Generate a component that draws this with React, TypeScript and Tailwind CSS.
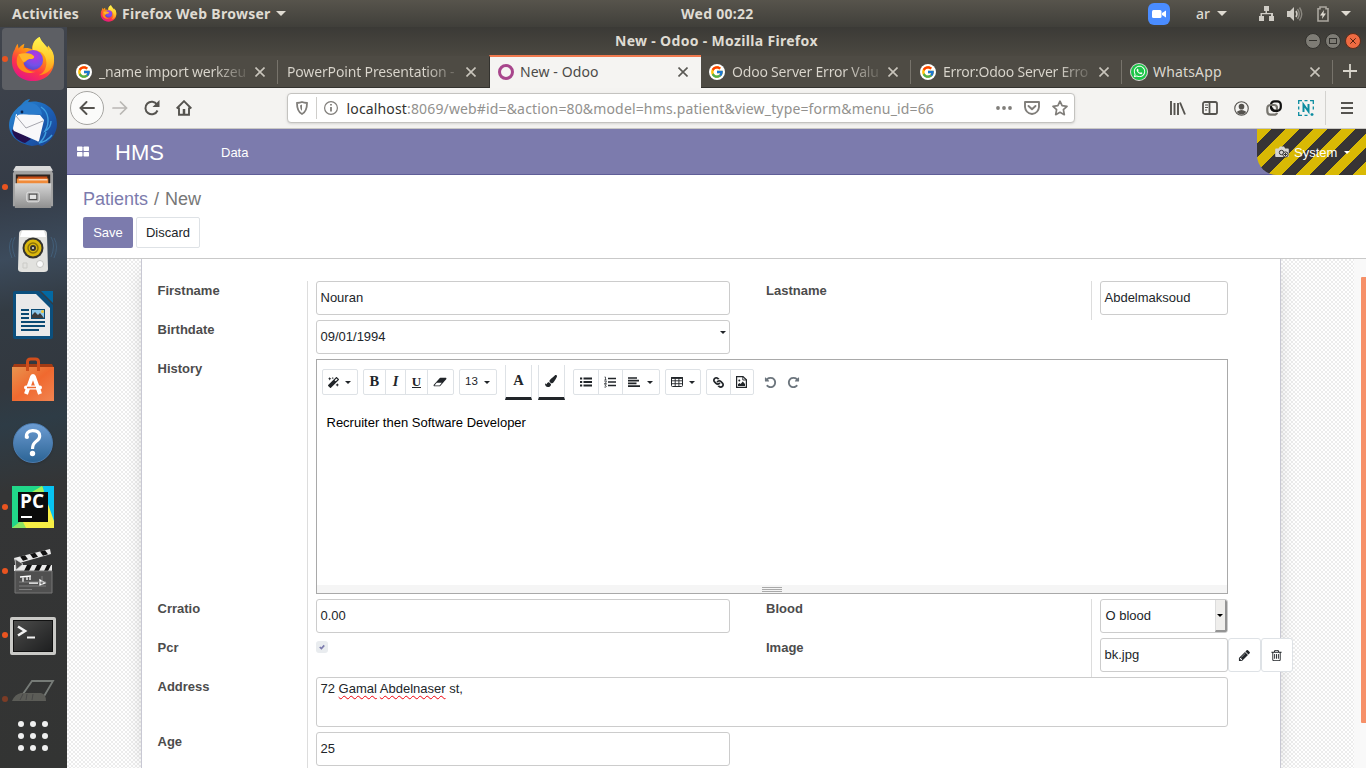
import React, { type ReactNode } from "react";
import { FcGoogle } from "react-icons/fc";
import { FaWhatsapp, FaLink, FaPaintBrush, FaMagic } from "react-icons/fa";

/* ---------- small drawings ---------- */

const Caret = ({ className = "" }: { className?: string }) => (
  <svg viewBox="0 0 10 5" className={className || "w-[10px] h-[5px]"} fill="currentColor">
    <path d="M0 0h10L5 5z" />
  </svg>
);

const FirefoxLogo = ({ className }: { className: string }) => (
  <svg viewBox="0 0 48 48" className={className}>
    <defs>
      <linearGradient id="ffa" x1="0.8" y1="0" x2="0.3" y2="1">
        <stop offset="0" stopColor="#fff44f" />
        <stop offset="0.4" stopColor="#ff980e" />
        <stop offset="0.7" stopColor="#ff3647" />
        <stop offset="1" stopColor="#e31587" />
      </linearGradient>
      <linearGradient id="ffb" x1="0.5" y1="0" x2="0.5" y2="1">
        <stop offset="0" stopColor="#fff64f" />
        <stop offset="0.55" stopColor="#ffcb2e" />
        <stop offset="1" stopColor="#ff8a16" />
      </linearGradient>
      <radialGradient id="ffc" cx="0.6" cy="0.3" r="0.8">
        <stop offset="0" stopColor="#b833e1" />
        <stop offset="0.6" stopColor="#7351e8" />
        <stop offset="1" stopColor="#4a48c8" />
      </radialGradient>
    </defs>
    <path d="M5 14c1-3 2-5 3-6l1 5c2-3 4-4 6-5l-1 5c3-1 7 0 9 1 0-6 3-11 8-13 1 4 4 7 8 11l1-2c4 5 6 10 6 16 0 12-9 21-22 21S2 38 2 26c0-5 1-9 3-12z" fill="url(#ffa)" />
    <path d="M31 1c-6 3-8 8-7 14 8-1 14 5 14 13 0 6-3 11-8 13 10-1 16-8 16-17 0-4-1-8-4-11l-2 2c-2-6-8-9-9-14z" fill="url(#ffb)" />
    <circle cx="24" cy="25" r="10.5" fill="url(#ffc)" />
    <path d="M9 19c5-1 11-2 16 2 1 2-2 3-5 3-3 1-3 3-6 4 1 7 7 10 13 9-8 4-19 0-20-9 0-4 0-6 2-9z" fill="#ff8b19" />
    <path d="M9 19c5-1 12-2 16 2 1 2-2 3-5 3-3 1-4 3-6 3-2-2-3-5-5-8z" fill="#ffb52a" />
  </svg>
);

const Thunderbird = () => (
  <svg viewBox="0 0 48 48" className="size-[48px]">
    <defs>
      <linearGradient id="tba" x1="0" y1="0" x2="1" y2="1">
        <stop offset="0" stopColor="#2b8ed6" />
        <stop offset="0.5" stopColor="#1c63b8" />
        <stop offset="1" stopColor="#1a3f8f" />
      </linearGradient>
    </defs>
    <path d="M12 6c3-4 6-6 9-6l-2 3c16-3 29 7 29 22 0 10-7 18-15 22l-4-1-6 1C11 45 0 38 0 26 0 19 4 12 12 6z" fill="url(#tba)" />
    <path d="M3 31c1 7 6 11 13 13l6-4L5 30z" fill="#25104f" />
    <path d="M7 15l24 1 4 5-5 21q-1 1-2 0L5 32q-1-1-1-3z" fill="#f8f8fa" />
    <path d="M7 17l10 12 17-7" fill="none" stroke="#a6a6ae" strokeWidth="1" />
    <path d="M8 17c-1-7 4-12 11-13 8-1 14 5 14 12-6-2-10 0-15-1-5 0-8 0-10 2z" fill="#2a7bcc" />
    <circle cx="13" cy="13" r="1.400" fill="#0c2450" />
    <path d="M32 8c8 5 9 16 4 24 4-2 6-6 6-10M37 33c-1 4-3 8-7 11 5-1 10-4 13-8" fill="none" stroke="#3f9fe0" strokeWidth="1.400" />
  </svg>
);

const Files = () => (
  <svg viewBox="0 0 44 46" className="h-[44px] w-[42px]" preserveAspectRatio="none">
    <defs>
      <linearGradient id="fla" x1="0" y1="0" x2="0" y2="1">
        <stop offset="0" stopColor="#d6d6d6" />
        <stop offset="1" stopColor="#8f8f8f" />
      </linearGradient>
    </defs>
    <path d="M4 2h36l3 7v34H1V9z" fill="#a2a2a2" />
    <path d="M4 1h36l3 5H1z" fill="#dadada" />
    <path d="M4 10h36v10H4z" fill="#2c2420" />
    <path d="M6 12h31v7H6z" fill="#c44b16" />
    <path d="M5 14h33v6H5z" fill="#f08b3a" />
    <path d="M7 15h30v1H7z" fill="#fff" />
    <path d="M3 19h38v26H3z" fill="url(#fla)" />
    <rect x="15.500" y="28.500" width="13" height="10" rx="2" fill="#ababab" stroke="#e5e5e5" />
    <rect x="18" y="30.500" width="8" height="5.500" fill="#e4e4e4" stroke="#444" strokeWidth="1" />
  </svg>
);

const Rhythmbox = () => (
  <svg viewBox="0 0 48 48" className="size-[48px]">
    <path d="M6 10q-5 8 0 20M3 11q-5 8 0 20M42 10q5 8 0 20M45 11q5 8 0 20" fill="none" stroke="#4d7da4" strokeWidth="1" opacity="0.4" />
    <path d="M14 3h20q4 0 4 4l1 35q0 3-4 3H13q-4 0-4-3l1-35q0-4 4-4z" fill="#e2e2df" />
    <path d="M13 4h22l2 6H11z" fill="#fff" />
    <circle cx="24" cy="21" r="10.500" fill="#34332e" />
    <circle cx="24" cy="21" r="8.500" fill="#dab70c" />
    <circle cx="24" cy="21" r="5" fill="none" stroke="#8b720a" strokeWidth="1.500" />
    <circle cx="24" cy="21" r="3" fill="#37352d" />
    <circle cx="24" cy="21" r="1.100" fill="#ddd" />
    <circle cx="31" cy="37" r="3.500" fill="#fafafa" stroke="#c5c5c2" />
    <path d="M14 36h4v5h-4z" fill="none" stroke="#cbcbc7" />
  </svg>
);

const Writer = () => (
  <svg viewBox="0 0 40 48" className="w-[40px] h-[48px]">
    <path d="M2 0h24l14 14v32q0 2-2 2H2q-2 0-2-2V2q0-2 2-2z" fill="#0b4f7d" />
    <path d="M28 0h12v12z" fill="#0369a3" />
    <path d="M3 3h20l14 14v28H3z" fill="#e9e9e9" />
    <path d="M8 18h8v2H8zM8 22h8v2H8zM8 26h8v2H8zM8 30h24v2H8zM8 34h24v2H8zM8 38h18v2H8z" fill="#0b4a73" />
    <rect x="18.500" y="18.500" width="13" height="9" fill="#8cc7ea" stroke="#0b4a73" />
    <path d="M19 27v-3l3-3 3 3 2-2 4 5z" fill="#3c3c3c" />
    <circle cx="29.500" cy="20.500" r="1.500" fill="#f0c636" />
  </svg>
);

const Software = () => (
  <svg viewBox="0 0 42 44" className="w-[42px] h-[44px]">
    <defs>
      <linearGradient id="swa" x1="0" y1="0" x2="1" y2="1">
        <stop offset="0" stopColor="#e8944f" />
        <stop offset="0.5" stopColor="#f0692f" />
        <stop offset="1" stopColor="#f18552" />
      </linearGradient>
    </defs>
    <path d="M2 7h38l2 4H0z" fill="#a33b14" />
    <path d="M0 10h42v34H0z" fill="url(#swa)" />
    <path d="M15.500 14V5q0-3 3-3h5q3 0 3 3v9" fill="none" stroke="#d04e1c" strokeWidth="3" />
    <path d="M14 37l6-17q1-2 2 0l6 17" fill="none" stroke="#fff" strokeWidth="4" />
    <rect x="12" y="28.500" width="18" height="4" rx="2" fill="#fff" />
    <path d="M15 30.500h9" stroke="#f0692f" strokeWidth="1.500" />
  </svg>
);

const Help = () => (
  <div className="flex size-[40px] items-center justify-center rounded-full border border-[#4c7cb0] bg-gradient-to-b from-[#6c9cd2] to-[#2c6596] shadow">
    <svg viewBox="0 0 20 28" className="h-[28px] w-[20px]">
      <path d="M3.500 9q-1-7 6-7.300 7-.2 7.200 5.300 0 3-3.700 5.500-3.500 2.500-3.500 7.500" fill="none" stroke="#fff" strokeWidth="3.200" />
      <circle cx="4" cy="8" r="2" fill="#fff" />
      <circle cx="9.500" cy="24.500" r="2.700" fill="#fff" />
    </svg>
  </div>
);

const PyCharm = () => (
  <div className="relative flex size-[42px] items-center justify-center">
    <svg viewBox="0 0 42 42" className="absolute inset-0 size-[42px]">
      <path d="M0 0h42v42H0z" fill="#21d789" />
      <path d="M20 6L30 0l4 8z" fill="#a6ee5b" />
      <path d="M31 0h11v36l-8-18z" fill="#07c3f2" />
      <path d="M0 42l8-4 28-20 6 17v7z" fill="#f7ef45" />
      <path d="M0 42l10-8 4 8z" fill="#8de463" />
    </svg>
    <div className="relative flex size-[30px] flex-col bg-[#0b0b0b] pl-[2px] font-['Open_Sans',sans-serif] text-[19px] font-bold leading-[19px] text-white">
      PC
      <span className="ml-[1px] mt-[5px] h-[2px] w-[11px] shrink-0 bg-white" />
    </div>
  </div>
);

const Clapper = () => (
  <svg viewBox="0 0 42 46" className="w-[42px] h-[46px]">
    <path d="M2 10L38 1l1 5L4 16z" fill="#e9e9e9" />
    <path d="M8 8.500l5-1.200 3 4-5 1.500zM18 6l5-1.200 3 4-5 1.500zM28 3.500l5-1.200 3 4-5 1.500z" fill="#111" />
    <path d="M2 17h38v6H2z" fill="#e9e9e9" />
    <path d="M15 17h5l-3 6h-5zM25 17h5l-3 6h-5zM35 17h4l-3 6h-4z" fill="#111" />
    <path d="M3 11l8 5-7 6z" fill="#4d4d4d" stroke="#ddd" strokeWidth="0.700" />
    <path d="M3 23h37v22H3z" fill="#505050" stroke="#777" />
    <path d="M8 29l11-1M11 29v5M15 28v4M18 28v4M17 35h9M28 32l5 3-5 2z" stroke="#fff" strokeWidth="1.300" fill="none" />
    <path d="M7 34h27M7 38h27M7 41.500h13M30 28v9" stroke="#8c8c8c" strokeWidth="0.800" />
  </svg>
);

const Terminal = () => (
  <div className="mt-[1px] h-[38px] w-[46px] rounded-[2px] border-[3px] border-[#c9c9c6] bg-[#111] p-px">
    <div className="h-full w-full bg-gradient-to-br from-[#4c4c4b] to-[#1e1f20]">
      <svg viewBox="0 0 38 30" className="h-full w-full">
        <path d="M4 5.500l7 4.500-7 4.500" fill="none" stroke="#f2f2f2" strokeWidth="2.600" />
        <path d="M13 16.500h8" stroke="#f2f2f2" strokeWidth="2" />
      </svg>
    </div>
  </div>
);

const Scanner = () => (
  <svg viewBox="0 0 44 24" className="w-[44px] h-[24px] opacity-60">
    <path d="M11 15L20 2h21L31 19" fill="none" stroke="#a3aba5" strokeWidth="1.800" />
    <path d="M0 22q3-7 9-8h20q5 1 5 8z" fill="#77776f" />
    <path d="M8 21l3-6M14 21l1-6M20 21l1-6" stroke="#555" strokeWidth="1" />
  </svg>
);

/* ---------- dock ---------- */

function DockItem({ children, dot, active }: { children: ReactNode; dot?: boolean; active?: boolean }) {
  return (
    <div className="relative flex h-16 w-[67px] shrink-0 items-center justify-center">
      {active && <span className="absolute left-[2px] top-[1px] h-[62px] w-[62px] rounded-[4px] bg-[#5d5f64]" />}
      {dot && <span className="absolute left-[2px] top-[29px] size-[6px] rounded-full bg-[#e95420]" />}
      <div className="relative -left-[0.5px]">{children}</div>
    </div>
  );
}

function Dock() {
  return (
    <aside className="flex w-[67px] shrink-0 flex-col overflow-hidden bg-[linear-gradient(170deg,#41454d_0%,#343b46_22%,#3c4b5c_31%,#333b43_38%,#32383f_48%,#2e3c46_53%,#343536_62%,#333433_100%)]">
      <DockItem dot active><FirefoxLogo className="size-[46px]" /></DockItem>
      <DockItem><Thunderbird /></DockItem>
      <DockItem dot><Files /></DockItem>
      <DockItem><Rhythmbox /></DockItem>
      <DockItem><Writer /></DockItem>
      <DockItem><Software /></DockItem>
      <DockItem><Help /></DockItem>
      <DockItem dot><PyCharm /></DockItem>
      <DockItem dot><Clapper /></DockItem>
      <DockItem dot><Terminal /></DockItem>
      <div className="relative flex h-[37px] shrink-0 items-end justify-center pb-[1px]">
        <span className="absolute left-[2px] top-[29px] size-[6px] rounded-full bg-[#7c3c26]" />
        <Scanner />
      </div>
      <div className="ml-[18px] mt-[17px] grid w-[30px] grid-cols-3 gap-[6px]">
        {Array.from({ length: 9 }, (_, i) => (
          <span key={i} className="size-[6px] rounded-full bg-[#f0f0f0]" />
        ))}
      </div>
    </aside>
  );
}

/* ---------- desktop top bar ---------- */

function TopBar() {
  return (
    <header className="flex h-[27px] shrink-0 items-center bg-gradient-to-b from-[#57544c] to-[#403f3a] font-['Noto_Sans',sans-serif] text-[14px] font-bold text-[#dfdbd2]">
      <span className="ml-[12px] w-[88px] tracking-[0.2px]">Activities</span>
      <FirefoxLogo className="mr-[5px] size-[17px]" />
      <span className="w-[154px] whitespace-nowrap tracking-[0.28px]">Firefox Web Browser</span>
      <Caret />
      <span className="ml-[395px] w-[467px] whitespace-nowrap tracking-[0.28px]">Wed 00:22</span>
      <span className="flex size-[22px] items-center justify-center rounded-[6px] bg-[#4a8cff]">
        <svg viewBox="0 0 14 8" className="h-[8px] w-[14px]" fill="#fff"><rect width="9.500" height="8" rx="1.500" /><path d="M10 3l4-2.500v7L10 5z" /></svg>
      </span>
      <span className="ml-[26px] w-[21px] font-medium">ar</span>
      <Caret />
      <svg viewBox="0 0 16 15" className="ml-[32px] h-[15px] w-[16px]" fill="#cfccc5">
        <path d="M5 0h5v5H8v2h6v3h1v5h-5v-5h2V8.200H3V10h2v5H0v-5h1.500V7h5V5H5z" />
      </svg>
      <svg viewBox="0 0 16 14" className="ml-[12px] h-[14px] w-[16px]">
        <path d="M0 4h3l4-4v14l-4-4H0z" fill="#cfccc5" />
        <path d="M9 4q2 3 0 6" fill="none" stroke="#cfccc5" strokeWidth="1.500" />
        <path d="M10.500 2q3.500 5 0 10M12.500 0.500q4.500 6.500 0 13" fill="none" stroke="#8b8880" strokeWidth="1.400" />
      </svg>
      <svg viewBox="0 0 12 16" className="ml-[14px] h-[16px] w-[12px]">
        <path d="M3 2.700V1h6v1.700h2v12.300H1V2.700z" fill="none" stroke="#aaa79f" strokeWidth="1.600" />
        <path d="M7 4L3 9.500h2.500L5 13l4-5.500H6.500z" fill="#dfdbd2" />
      </svg>
      <Caret className="ml-[12px] h-[5px] w-[10px]" />
    </header>
  );
}

/* ---------- browser chrome ---------- */

const Cross = ({ className = "text-[#c9c5bc]" }: { className?: string }) => (
  <svg viewBox="0 0 10 10" className={"size-[10px] shrink-0 " + className} stroke="currentColor" strokeWidth="1.600">
    <path d="M.5.5l9 9M9.500.5l-9 9" />
  </svg>
);

const GoogleMark = () => (
  <span className="mr-[7px] flex size-[16px] shrink-0 items-center justify-center rounded-full bg-white">
    <FcGoogle className="size-[14px]" />
  </span>
);

function Tab({ icon, title, track, sep = true, fade = true }: { icon?: ReactNode; title: string; track: string; sep?: boolean; fade?: boolean }) {
  return (
    <div className="relative flex h-[31px] w-[211px] shrink-0 items-center pl-[9px] text-[#dbd7ce]">
      {icon}
      <span className={"flex-1 whitespace-nowrap " + (fade ? "bg-[linear-gradient(90deg,#dbd7ce_calc(100%-36px),#55524b)] bg-clip-text text-transparent " : "") + track}>{title}</span>
      <span className="ml-[5px] mr-[13px] flex"><Cross /></span>
      {sep && <span className="absolute right-0 top-[4px] h-[24px] w-px bg-[#77736b]" />}
    </div>
  );
}

function BrowserChrome() {
  return (
    <div className="shrink-0 font-['Noto_Sans',sans-serif] text-[14px]">
      <div className="flex h-[29px] items-center bg-gradient-to-b from-[#3b3a36] to-[#4b4841] pb-[2px]">
        <span className="ml-[548px] w-[690px] whitespace-nowrap text-[14px] font-bold tracking-[0.32px] text-[#dfdbd2]">New - Odoo - Mozilla Firefox</span>
        <div className="flex gap-[4px]">
          <span className="flex size-[16px] items-center justify-center rounded-full border border-[#33322e] bg-[#7e7c75]"><span className="h-px w-[8px] bg-[#33322e]" /></span>
          <span className="flex size-[16px] items-center justify-center rounded-full border border-[#33322e] bg-[#7e7c75]"><span className="h-[6px] w-[8px] border border-[#33322e]" /></span>
          <span className="flex size-[16px] items-center justify-center rounded-full border border-[#5c2c1b] bg-[#ef6b42]"><Cross className="scale-60 text-[#4a1e10]" /></span>
        </div>
      </div>
      <div className="flex h-[32px] items-start border-b border-[#33322e] bg-[#4e4b44]">
        <Tab icon={<GoogleMark />} title="_name import werkzeu" track="tracking-[-0.2px]" />
        <Tab title="PowerPoint Presentation -" track="tracking-[-0.15px]" sep={false} />
        <div className="-mt-px flex h-[33px] w-[212px] shrink-0 items-center border-l border-t-2 border-l-[#33322e] border-t-[#f0794e] bg-[#f5f4f2] pb-[2px] pl-[8px] text-[#4c4b48]">
          <span className="mr-[6px] size-[16px] rounded-full border-[3.500px] border-[#a8468c]" />
          <span className="flex-1 tracking-[0.1px]">New - Odoo</span>
          <span className="mr-[13px] flex"><Cross className="text-[#5a5955]" /></span>
        </div>
        <div className="-ml-px flex">
          <Tab icon={<GoogleMark />} title="Odoo Server Error Valu" track="tracking-[-0.2px]" />
          <Tab icon={<GoogleMark />} title="Error:Odoo Server Erro" track="tracking-[-0.25px]" />
          <Tab
            fade={false}
            icon={<span className="mr-[6px] flex size-[16px] shrink-0 items-center justify-center rounded-full bg-[#1cc548] ring-1 ring-white/80"><FaWhatsapp className="size-[13px] text-white" /></span>}
            title="WhatsApp"
            track="tracking-[0.15px]"
          />
        </div>
        <svg viewBox="0 0 14 14" className="ml-[10px] mt-[8px] size-[14px]" stroke="#d8d4cb" strokeWidth="1.800"><path d="M7 0v14M0 7h14" /></svg>
      </div>
      <div className="flex h-[41px] items-center border-b border-[#c9c8c5] bg-[#f4f3f1] text-[#55534f]">
        <span className="ml-[3px] flex size-[34px] items-center justify-center rounded-full border border-[#a6a5a2] bg-[#fbfbfa]">
          <svg viewBox="0 0 16 14" className="h-[14px] w-[16px]" fill="none" stroke="currentColor" strokeWidth="1.900" strokeLinecap="round"><path d="M15 7H1.500M7.500 1l-6 6 6 6" /></svg>
        </span>
        <svg viewBox="0 0 16 14" className="ml-[8px] h-[14px] w-[16px]" fill="none" stroke="#b9b7b4" strokeWidth="1.700" strokeLinecap="round"><path d="M1 7h13.500M8.500 1l6 6-6 6" /></svg>
        <svg viewBox="0 0 16 16" className="ml-[16px] size-[16px]" fill="none" stroke="currentColor" strokeWidth="2"><path d="M13.500 10.500A6.300 6.300 0 1 1 13 4.500" /><path d="M15.500 0v7h-7z" fill="currentColor" stroke="none" /></svg>
        <svg viewBox="0 0 16 16" className="ml-[16px] size-[16px]" fill="none" stroke="currentColor" strokeWidth="1.900"><path d="M.7 8.500L8 1.200l7.300 7.300M3 7.500v7.300h10V7.500" /><path d="M8 9v5" strokeWidth="2.500" /></svg>
        <div className="ml-[95px] flex h-[30px] w-[788px] items-center rounded-[4px] border border-[#c4c3c0] bg-white text-[#807e7a] shadow-sm">
          <svg viewBox="0 0 12 14" className="ml-[8px] h-[14px] w-[12px]" fill="none" stroke="currentColor" strokeWidth="1.800"><path d="M1 2q3-.2 5-1 2 .8 5 1 0 8.500-5 11Q1 10.500 1 2z" /><path d="M6 3.500v6.500q-2-2-2-5.500z" fill="currentColor" stroke="none" /></svg>
          <span className="ml-[8px] h-[22px] w-px bg-[#cfcecb]" />
          <svg viewBox="0 0 14 14" className="ml-[7px] size-[14px]" fill="none" stroke="currentColor"><circle cx="7" cy="7" r="6.400" strokeWidth="1.200" /><path d="M7 6v4.500M7 3v1.500" strokeWidth="1.800" /></svg>
          <span className="ml-[8.500px] w-[649.500px] whitespace-nowrap tracking-[0.15px] text-[#92918e]"><span className="text-[#33322f]">localhost</span>:8069/web#id=&amp;action=80&amp;model=hms.patient&amp;view_type=form&amp;menu_id=66</span>
          <svg viewBox="0 0 16 4" className="h-[4px] w-[16px]" fill="currentColor"><circle cx="2" cy="2" r="1.900" /><circle cx="8" cy="2" r="1.900" /><circle cx="14" cy="2" r="1.900" /></svg>
          <svg viewBox="0 0 16 14" className="ml-[12px] h-[14px] w-[16px]" fill="none" stroke="currentColor" strokeWidth="1.900" strokeLinejoin="round"><path d="M1 1h14v5q-.5 6-7 7Q1.500 12 1 6z" /><path d="M4.500 5L8 8.300 11.500 5" strokeLinecap="round" /></svg>
          <svg viewBox="0 0 16 16" className="ml-[12px] size-[16px]" fill="none" stroke="currentColor" strokeWidth="1.700" strokeLinejoin="round"><path d="M8 1.200l2.100 4.500 4.900.6-3.600 3.400.9 5L8 12.300l-4.300 2.400.9-5L1 6.300l4.900-.6z" /></svg>
        </div>
        <svg viewBox="0 0 16 14" className="ml-[95px] h-[14px] w-[16px]" stroke="currentColor" strokeWidth="1.900"><path d="M1 0v14M4.500 2v12M8 2v12M10 1.500L15 13.500" /></svg>
        <svg viewBox="0 0 16 14" className="ml-[16px] h-[14px] w-[16px]" fill="none" stroke="currentColor" strokeWidth="1.800"><rect x="1" y="1" width="14" height="12" rx="1.800" /><path d="M7.500 1v12" /><path d="M3 4h3M3 6.500h3M3 9h2" strokeWidth="1" /></svg>
        <svg viewBox="0 0 16 16" className="ml-[16px] size-[15px]"><circle cx="8" cy="8" r="7.200" fill="none" stroke="currentColor" strokeWidth="1.200" /><circle cx="8" cy="6" r="3" fill="currentColor" /><path d="M3 11.500q5-4 10 0-1.500 3-5 3t-5-3z" fill="currentColor" /></svg>
        <svg viewBox="0 0 16 16" className="ml-[17px] size-[16px]" fill="none" strokeWidth="2.200"><rect x="5" y="1.300" width="9.800" height="9.500" rx="3.500" stroke="#111" /><path d="M9.500 11H11V8q0-3-3-3H5Q1.300 5 1.300 8.500V11q0 3.700 3.200 3.700H8q2.500 0 3-2" stroke="#77756f" /><path d="M6 7.500Q6 10.800 9 10.800h3" stroke="#111" /></svg>
        <svg viewBox="0 0 16 16" className="ml-[16px] size-[16px]" fill="none" stroke="#0b8ca0"><path d="M.7 4V.7H4M6.500.7h3M12 .7h3.300V4M15.300 6.500v3M.7 6.500v3M.7 12v3.300H4M6.500 15.300h3M12.500 14.500h3M14 13v3" strokeWidth="1.300" /><path d="M5.500 12V4.500l5 7V4" strokeWidth="2" /></svg>
        <span className="ml-[11px] h-[34px] w-px bg-[#d3d2cf]" />
        <svg viewBox="0 0 12 12" className="ml-[15px] size-[12px]" stroke="currentColor" strokeWidth="2"><path d="M0 1h12M0 6h12M0 11h12" /></svg>
      </div>
    </div>
  );
}

/* ---------- application ---------- */

const Glyph = ({ d, className, box = "0 0 1792 1792" }: { d: string; className: string; box?: string }) => (
  <svg viewBox={box} className={className} fill="currentColor"><path d={d} /></svg>
);

const ERASER = "M960 1408l336-384h-768l-336 384h768zm1013-1077q15 34 9.500 71.500t-30.500 65.500l-896 1024q-38 44-96 44h-768q-38 0-69.500-20.500t-47.500-54.500q-15-34-9.500-71.500t30.500-65.500l896-1024q38-44 96-44h768q38 0 69.500 20.500t47.500 54.500z";
const UNDO = "M1664 896q0 156-61 298t-164 245-245 164-298 61q-172 0-327-72.500t-264-204.500q-7-10-6.500-22.500t8.500-20.500l137-138q10-9 25-9 16 2 23 12 73 95 179 147t225 52q104 0 198.500-40.500t163.500-109.500 109.500-163.500 40.500-198.500-40.500-198.500-109.500-163.500-163.500-109.500-198.500-40.500q-98 0-188 35.500t-160 101.500l137 138q31 30 14 69-17 40-59 40h-448q-26 0-45-19t-19-45v-448q0-42 40-59 39-17 69 14l130 129q107-101 244.500-156.500t284.500-55.500q156 0 298 61t245 164 164 245 61 298z";
const PENCIL = "M491 1536l91-91-235-235-91 91v107h128v128h107zm523-928q0-22-22-22-10 0-17 7l-542 542q-7 7-7 17 0 22 22 22 10 0 17-7l542-542q7-7 7-17zm-54-192l416 416-832 832h-416v-416zm683 96q0 53-37 90l-166 166-416-416 166-165q36-38 90-38 53 0 91 38l235 234q37 39 37 91z";
const TRASH = "M704 736v576q0 14-9 23t-23 9h-64q-14 0-23-9t-9-23v-576q0-14 9-23t23-9h64q14 0 23 9t9 23zm256 0v576q0 14-9 23t-23 9h-64q-14 0-23-9t-9-23v-576q0-14 9-23t23-9h64q14 0 23 9t9 23zm256 0v576q0 14-9 23t-23 9h-64q-14 0-23-9t-9-23v-576q0-14 9-23t23-9h64q14 0 23 9t9 23zm128 724v-948h-896v948q0 22 7 40.500t14.500 27 10.500 8.500h832q3 0 10.500-8.500t14.500-27 7-40.500zm-672-1076h448l-48-117q-7-9-17-11h-317q-10 2-17 11zm928 32v64q0 14-9 23t-23 9h-96v948q0 83-47 143.500t-113 60.500h-832q-66 0-113-58.500t-47-141.500v-952h-96q-14 0-23-9t-9-23v-64q0-14 9-23t23-9h309l70-167q15-37 54-63t79-26h320q40 0 79 26t54 63l70 167h309q14 0 23 9t9 23z";

function AppNav() {
  return (
    <nav className="flex h-[46px] shrink-0 items-center border-b border-[#5f5e97] bg-[#7c7bad] text-[13px] text-white">
      <svg viewBox="0 0 12 10" className="ml-[10px] h-[11px] w-[12px]" fill="#fff"><rect width="5.500" height="4.500" rx=".7" /><rect x="6.500" width="5.500" height="4.500" rx=".7" /><rect y="5.500" width="5.500" height="4.500" rx=".7" /><rect x="6.500" y="5.500" width="5.500" height="4.500" rx=".7" /></svg>
      <span className="ml-[26px] w-[106px] pt-[1px] text-[22px]">HMS</span>
      <span className="flex-1 pt-[2px]">Data</span>
      <div className="-mb-px flex h-[46px] w-[109px] items-center rounded-bl-[20px] bg-[repeating-linear-gradient(135deg,#d9b904,#d9b904_10px,#373435_10px,#373435_20px)] pl-[18px]">
        <svg viewBox="0 0 14 12" className="mr-[5px] h-[12px] w-[14px]"><path d="M1 2.500h2.500L5 .5h4l1.200 2H13q.8 0 .8 1V10q0 1-.8 1H1q-.8 0-.8-1V3.500q0-1 .8-1z" fill="#d6d5d3" /><circle cx="6.500" cy="6.500" r="2.200" fill="none" stroke="#373435" /><circle cx="10.500" cy="8.500" r="2.600" fill="#ddd" stroke="#373435" /><path d="M10.500 7v3M9 8.500h3" stroke="#373435" /></svg>
        <span className="w-[50px] pt-[2px]">System</span>
        <Caret className="h-[3px] w-[6px]" />
      </div>
    </nav>
  );
}

function ControlPanel() {
  return (
    <div className="h-[84px] shrink-0 border-b border-[#c9c9c9] bg-white pl-[16px] pt-[11px]">
      <div className="text-[18px] leading-[26px] text-[#777]"><span className="text-[#7c7bad]">Patients</span><span className="px-[6px]">/</span>New</div>
      <div className="mt-[5px] flex gap-[3px] text-[13px]">
        <button className="h-[31px] w-[50px] rounded-[2px] bg-[#7c7bad] text-white">Save</button>
        <button className="h-[31px] w-[64px] rounded-[2px] border border-[#dee2e6] bg-white text-[#212529]">Discard</button>
      </div>
    </div>
  );
}

const Label = ({ children }: { children: ReactNode }) => (
  <div className="w-[149px] shrink-0 pt-[2px] text-[13px] font-bold leading-[16px] text-[#4c4c4c]">{children}</div>
);

const Label2 = ({ children }: { children: ReactNode }) => (
  <div className="ml-[36px] w-[325px] shrink-0 pl-[0.500px] pt-[2px] text-[13px] font-bold leading-[16px] text-[#4c4c4c]">{children}</div>
);

const Divider = () => <div className="mr-[8px] w-px shrink-0 self-stretch bg-[#ddd]" />;

const Box = ({ children, className }: { children: ReactNode; className: string }) => (
  <div className={"flex h-[34px] shrink-0 items-center rounded-[3px] border border-[#ccc] bg-white pl-[4px] text-[#212529] " + className}>{children}</div>
);

const Row = ({ children, className = "h-[39px]" }: { children: ReactNode; className?: string }) => (
  <div className={"flex shrink-0 items-start " + className}>{children}</div>
);

const Group = ({ children, className }: { children: ReactNode; className: string }) => (
  <div className={"flex h-[26px] divide-x divide-[#dee2e6] rounded-[2px] border border-[#dee2e6] " + className}>{children}</div>
);

const Btn = ({ children, className }: { children: ReactNode; className: string }) => (
  <span className={"flex items-center justify-center " + className}>{children}</span>
);

const MiniCaret = () => <Caret className="h-[3px] w-[6px]" />;

function Editor() {
  return (
    <div className="flex h-[235px] w-[912px] shrink-0 flex-col border border-[#a9a9a9]">
      <div className="flex h-[48px] pl-[5px] pt-[5px] text-[#212529]">
        <Group className="mt-[4px] w-[36px]"><Btn className="w-full gap-[6px]"><FaMagic className="size-[11px]" /><MiniCaret /></Btn></Group>
        <Group className="ml-[5px] mt-[4px] w-[91px] font-['Liberation_Serif',serif] text-[14.500px] font-bold">
          <Btn className="w-[23px]">B</Btn>
          <Btn className="w-[20px] italic">I</Btn>
          <Btn className="w-[22px]"><span className="border-b border-[#212529] text-[13px] font-semibold leading-[11px]">U</span></Btn>
          <Btn className="w-[25px]"><Glyph d={ERASER} box="0 0 2048 1792" className="h-[12px] w-[14px]" /></Btn>
        </Group>
        <Group className="ml-[5px] mt-[4px] w-[38px]"><Btn className="w-full gap-[6px] text-[11.500px]">13<MiniCaret /></Btn></Group>
        <Btn className="ml-[8px] h-[35px] w-[27px] border-x border-b-[3px] border-[#dee2e6] border-b-[#212529] pb-px pl-px font-['Liberation_Serif',serif] text-[14.500px] font-bold">A</Btn>
        <Btn className="ml-[6px] h-[35px] w-[27px] border-x border-b-[3px] border-[#dee2e6] border-b-[#212529] pb-px"><FaPaintBrush className="size-[12px]" /></Btn>
        <Group className="ml-[8px] mt-[4px] w-[87px]">
          <Btn className="w-[25px]">
            <svg viewBox="0 0 12 10" className="h-[10px] w-[12px]" stroke="currentColor"><path d="M3.500 1.500H12M3.500 5H12M3.500 8.500H12" strokeWidth="1.800" /><path d="M0 1.500h2.200M0 5h2.200M0 8.500h2.200" strokeWidth="2.200" /></svg>
          </Btn>
          <Btn className="w-[24px]">
            <svg viewBox="0 0 12 12" className="size-[12px]" stroke="currentColor" fill="none"><path d="M4 2.500h8M4 6h8M4 9.500h8" strokeWidth="1.700" /><path d="M.5 1h1v3M.3 4h2.400M.3 5.200h2v1L.4 7.500h2.300M.3 8.700h2l-1 1q1.500.3.800 1.300-.8.500-1.800 0" strokeWidth=".7" /></svg>
          </Btn>
          <Btn className="flex-1 gap-[7px]">
            <svg viewBox="0 0 12 10" className="h-[10px] w-[12px]" stroke="currentColor" strokeWidth="1.700"><path d="M0 1h9M0 3.700h11M0 6.400h8.500M0 9.100h12" /></svg>
            <MiniCaret />
          </Btn>
        </Group>
        <Group className="ml-[5px] mt-[4px] w-[36px]">
          <Btn className="w-full gap-[6px]">
            <svg viewBox="0 0 12 10" className="h-[10px] w-[12px]" fill="none" stroke="currentColor"><rect x=".5" y=".5" width="11" height="9" rx="1" /><path d="M0 1h12" strokeWidth="1.800" /><path d="M.5 3.800h11M.5 6.700h11M4.200 1v8.500M7.900 1v8.500" strokeWidth=".9" /></svg>
            <MiniCaret />
          </Btn>
        </Group>
        <Group className="ml-[5px] mt-[4px] w-[48px]">
          <Btn className="w-[24px]"><FaLink className="size-[11px] rotate-90" /></Btn>
          <Btn className="flex-1">
            <svg viewBox="0 0 11 12" className="h-[12px] w-[11px]" fill="none" stroke="currentColor"><path d="M.6.6h6.400l3.400 3.200v7.600H.6z" strokeWidth="1.200" /><path d="M6.800.8v3.200h3.400" strokeWidth=".9" /><path d="M2 10V8.300l1.500-1.400 1.100 1.100 2.200-2.500L9 8v2z" fill="currentColor" stroke="none" /><circle cx="3.300" cy="4.600" r="1" fill="currentColor" stroke="none" /></svg>
          </Btn>
        </Group>
        <div className="mt-[4px] flex h-[26px] items-center text-[#6c757d]">
          <Glyph d={UNDO} className="ml-[10px] size-[13px]" />
          <Glyph d={UNDO} className="ml-[10px] size-[13px] -scale-x-100" />
        </div>
      </div>
      <div className="flex-1 pl-[10px] pt-[6px] text-[13px] leading-[18px] text-black">Recruiter then Software Developer</div>
      <div className="flex h-[8px] flex-col items-center gap-px bg-[#f5f5f5] pt-[2px]">
        <span className="h-px w-[20px] bg-[#a9a9a9]" />
        <span className="h-px w-[20px] bg-[#a9a9a9]" />
        <span className="h-px w-[20px] bg-[#a9a9a9]" />
      </div>
    </div>
  );
}

const misspelt = "underline decoration-[#f0000a] decoration-wavy decoration-[1px] underline-offset-[2px] [text-decoration-skip-ink:none]";

function Sheet() {
  return (
    <div className="flex w-[1140px] shrink-0 flex-col border-x border-[#c8c8d3] bg-white pl-[15.500px] pt-[22px] text-[13px] shadow-[0_5px_20px_-8px_rgba(0,0,0,0.3)]">
      <Row><Label>Firstname</Label><Divider /><Box className="w-[414px]">Nouran</Box><Label2>Lastname</Label2><Divider /><Box className="w-[128px]">Abdelmaksoud</Box></Row>
      <Row>
        <Label>Birthdate</Label><Divider />
        <Box className="w-[414px] justify-between pr-[3px]">09/01/1994<Caret className="mb-[9px] h-[3px] w-[6px]" /></Box>
      </Row>
      <Row className="h-[240px]"><Label>History</Label><Divider /><Editor /></Row>
      <Row>
        <Label>Crratio</Label><Divider /><Box className="w-[414px]">0.00</Box>
        <Label2>Blood</Label2><Divider />
        <Box className="w-[128px] justify-between overflow-hidden pl-[5px]">
          O blood
          <span className="flex h-[32px] w-[12px] items-center justify-center border-b-2 border-l border-r-2 border-[#949494] border-l-[#dcdcdc] bg-[#efeeec] text-black"><MiniCaret /></span>
        </Box>
      </Row>
      <Row>
        <Label>Pcr</Label><Divider />
        <div className="w-[414px] shrink-0 pt-[3px]">
          <span className="flex size-[12px] items-center justify-center rounded-[3px] bg-[#e9ecef]">
            <svg viewBox="0 0 8 8" className="size-[6px]" fill="none" stroke="#7c7bad" strokeWidth="2.200"><path d="M1 4l2.200 2.200L7 1.800" /></svg>
          </span>
        </div>
        <Label2>Image</Label2><Divider /><Box className="w-[128px]">bk.jpg</Box>
        <span className="flex h-[34px] w-[33px] shrink-0 items-center justify-center rounded-[3px] border border-[#dee2e6] bg-white text-[#212529]"><Glyph d={PENCIL} className="size-[13px]" /></span>
        <span className="z-10 flex h-[34px] w-[32px] shrink-0 items-center justify-center rounded-[3px] border border-[#dee2e6] bg-white text-[#212529]"><Glyph d={TRASH} className="size-[13px]" /></span>
      </Row>
      <Row className="h-[55px]">
        <Label>Address</Label><Divider />
        <div className="h-[50px] w-[912px] shrink-0 rounded-[3px] border border-[#ccc] pl-[4px] pt-[2px] leading-[18px] text-[#212529]">
          72 <span className={misspelt}>Gamal</span> <span className={misspelt}>Abdelnaser</span> st,
        </div>
      </Row>
      <Row><Label>Age</Label><Divider /><Box className="w-[414px]">25</Box></Row>
    </div>
  );
}

export default function App() {
  return (
    <div className="flex h-[768px] w-[1366px] flex-col overflow-hidden font-['Liberation_Sans',Arial,sans-serif]">
      <TopBar />
      <div className="flex min-h-0 flex-1">
        <Dock />
        <main className="flex min-w-0 flex-1 flex-col">
          <BrowserChrome />
          <AppNav />
          <ControlPanel />
          <div className="flex min-h-0 flex-1 overflow-hidden bg-[#f9f9f9]">
            <div className="flex w-[1287px] shrink-0 bg-white bg-[conic-gradient(#ececec_25%,#fff_0_50%,#ececec_0_75%,#fff_0)] bg-[length:4px_4px] pl-[74px]">
              <Sheet />
            </div>
            <div className="ml-[7px] mt-[18px] h-[446px] w-[5px] rounded-l-[1px] bg-[#f69068]" />
          </div>
        </main>
      </div>
    </div>
  );
}
